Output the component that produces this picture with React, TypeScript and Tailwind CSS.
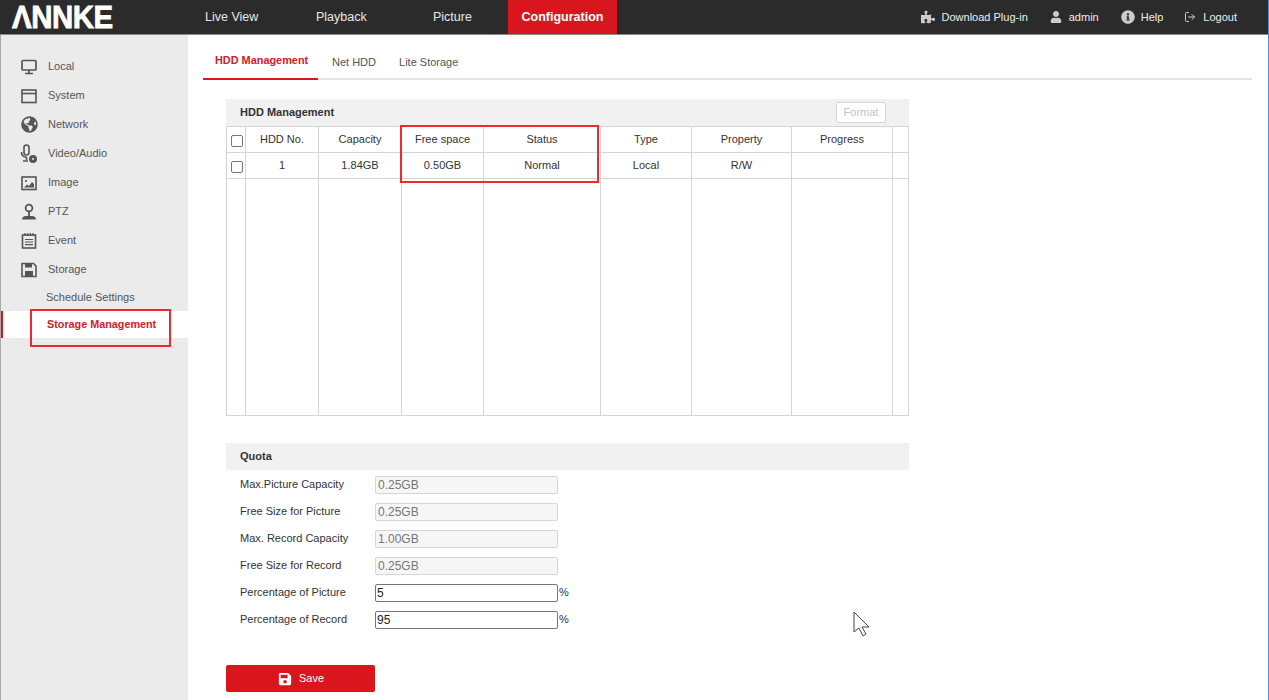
import React from 'react';
import { LogOut } from 'lucide-react';
import { FaGlobeAmericas, FaPuzzlePiece, FaUser, FaInfoCircle, FaSave } from 'react-icons/fa';

const MonitorIcon = () => (
  <svg width="16" height="16" viewBox="0 0 16 16" fill="none" stroke="#555" strokeWidth="1.7">
    <rect x="1" y="1.500" width="14" height="9.500" rx="1" />
    <path d="M8 11v3M4 14.500h8" />
  </svg>
);

const WindowIcon = () => (
  <svg width="16" height="16" viewBox="0 0 16 16" fill="none" stroke="#555" strokeWidth="1.6">
    <rect x="1" y="2" width="14" height="12.500" />
    <path d="M1 5.500h14" />
  </svg>
);

const MicIcon = () => (
  <svg width="18" height="20" viewBox="0 0 18 20" fill="none" stroke="#555" strokeWidth="1.6">
    <rect x="4" y="1" width="5" height="10" rx="2.5" />
    <path d="M1.500 8c0 3.500 2 5 5 5M6.500 13v3M3 17h5" />
    <circle cx="13" cy="15" r="3.200" fill="#555" />
    <circle cx="13" cy="15" r="1" fill="#ebebeb" stroke="none" />
  </svg>
);

const PictureIcon = () => (
  <svg width="16" height="16" viewBox="0 0 16 16" fill="none" stroke="#555" strokeWidth="1.6">
    <rect x="1" y="2" width="14" height="12.500" />
    <circle cx="5" cy="6" r="1.100" fill="#555" stroke="none" />
    <path d="M3 12.500l3-3 2 1.500 3-4 2 2v3.500z" fill="#555" stroke="none" />
  </svg>
);

const PtzIcon = () => (
  <svg width="18" height="18" viewBox="0 0 18 18" fill="none" stroke="#555" strokeWidth="1.8">
    <circle cx="9" cy="5" r="3.400" />
    <path d="M9 8.500v4.500" />
    <path d="M2 16.500c0-2 1.500-3.500 4-3.500h6c2.500 0 4 1.500 4 3.500z" fill="#555" stroke="none" />
  </svg>
);

const EventIcon = () => (
  <svg width="16" height="17" viewBox="0 0 16 17" fill="none" stroke="#555" strokeWidth="1.6">
    <rect x="1.500" y="3" width="13" height="13" />
    <path d="M4 1v3M6.700 1v3M9.400 1v3M12 1v3" strokeWidth="1.200" />
    <path d="M4 7.500h8M4 10h8M4 12.700h8" strokeWidth="1.200" />
  </svg>
);

const DiskIcon = () => (
  <svg width="16" height="16" viewBox="0 0 16 16" fill="none" stroke="#555" strokeWidth="1.6">
    <path d="M1 1.500h11.500l2.500 2.500v10.500h-14z" />
    <path d="M4 2v3.500h7V2" fill="#555" stroke="none" />
    <rect x="4" y="9" width="8" height="5" fill="#555" stroke="none" />
  </svg>
);

const navItems = [
  { label: 'Local', icon: <MonitorIcon /> },
  { label: 'System', icon: <WindowIcon /> },
  { label: 'Network', icon: <FaGlobeAmericas size={17} color="#555" /> },
  { label: 'Video/Audio', icon: <MicIcon /> },
  { label: 'Image', icon: <PictureIcon /> },
  { label: 'PTZ', icon: <PtzIcon /> },
  { label: 'Event', icon: <EventIcon /> },
  { label: 'Storage', icon: <DiskIcon /> },
];

const columns = [
  { label: 'HDD No.', value: '1', width: 'w-[73px]' },
  { label: 'Capacity', value: '1.84GB', width: 'w-[83px]' },
  { label: 'Free space', value: '0.50GB', width: 'w-[82px]' },
  { label: 'Status', value: 'Normal', width: 'w-[117px]' },
  { label: 'Type', value: 'Local', width: 'w-[91px]' },
  { label: 'Property', value: 'R/W', width: 'w-[100px]' },
  { label: 'Progress', value: '', width: 'w-[101px]' },
];

const quotaRows = [
  { label: 'Max.Picture Capacity', value: '0.25GB', disabled: true },
  { label: 'Free Size for Picture', value: '0.25GB', disabled: true },
  { label: 'Max. Record Capacity', value: '1.00GB', disabled: true },
  { label: 'Free Size for Record', value: '0.25GB', disabled: true },
  { label: 'Percentage of Picture', value: '5', disabled: false },
  { label: 'Percentage of Record', value: '95', disabled: false },
];

const Checkbox = () => (
  <div className="w-[12px] h-[12px] border border-[#767676] rounded-[2px] bg-white ml-[4px] mt-[2px]"></div>
);

export default function App() {
  return (
    <div className="relative w-[1269px] h-[700px] overflow-hidden bg-white font-['Liberation_Sans',Arial,sans-serif] text-[11px] text-[#333] border-r border-[#4a90d9]">
      <header className="h-[35px] bg-[#2b2b2b] border-b border-[#8a8a8a] flex items-stretch text-[#e8e8e8]">
        <div className="w-[205px] pl-[12px] flex items-center">
          <span aria-label="ANNKE" className="block text-[32px] leading-[34px] font-bold text-white origin-left scale-x-[0.92] tracking-[-0.5px] [-webkit-text-stroke:0.8px_white]">ΛNNKE</span>
        </div>
        <nav className="flex items-center text-[12.5px]">
          <span className="w-[111px]">Live View</span>
          <span className="w-[117px]">Playback</span>
          <span className="w-[75px]">Picture</span>
          <span className="w-[109px] h-full bg-[#d9161e] text-white font-bold flex items-center justify-center">Configuration</span>
        </nav>
        <div className="ml-auto flex items-center pr-[31px] text-[11px] text-[#eee]">
          <FaPuzzlePiece size={14} color="#ccc" className="mr-[7px]" />
          <span className="mr-[22px]">Download Plug-in</span>
          <FaUser size={12} color="#ccc" className="mr-[7px]" />
          <span className="mr-[22px]">admin</span>
          <FaInfoCircle size={14} color="#ccc" className="mr-[6px]" />
          <span className="mr-[21px]">Help</span>
          <LogOut size={12} color="#ccc" className="mr-[7px]" />
          <span>Logout</span>
        </div>
      </header>

      <div className="flex h-[665px]">
        <aside className="w-[188px] shrink-0 bg-[#ebebeb] border-l border-[#a8a8a8] pt-[17px] text-[#555]">
          {navItems.map(item => (
            <div key={item.label} className="h-[29px] flex items-center">
              <div className="w-[18px] ml-[19px] flex justify-center">{item.icon}</div>
              <span className="ml-[10px]">{item.label}</span>
            </div>
          ))}
          <div className="h-[27px] pl-[45px] flex items-center">Schedule Settings</div>
          <div className="h-[27px] pl-[44px] flex items-center bg-white border-l-2 border-[#d9161e] font-bold text-[10.8px] text-[#d0202a]">Storage Management</div>
        </aside>

        <main className="flex-1 min-w-0 pl-[15px] pr-[16px]">
          <div className="h-[45px] flex items-stretch border-b-2 border-[#e4e4e4] pt-[9px]">
            <div className="w-[115px] -mb-[2px] pl-[12px] pt-[8px] border-b-2 border-[#d9161e] font-bold text-[10.9px] text-[#d0202a]">HDD Management</div>
            <div className="ml-[14px] pt-[10px] text-[#555]">Net HDD</div>
            <div className="ml-[23px] pt-[10px] text-[#555]">Lite Storage</div>
          </div>

          <section className="ml-[23px] w-[683px] mt-[19px]">
            <div className="h-[27px] bg-[#f1f1f1] pl-[14px] pr-[23px] flex items-center justify-between">
              <span className="font-bold text-[#333]">HDD Management</span>
              <span className="w-[50px] h-[21px] border border-[#d6d6d6] rounded-[2px] bg-white flex items-center justify-center text-[#c4c4c4]">Format</span>
            </div>
            <div className="flex h-[290px] border border-[#d4d4d4] text-[#333] text-center">
              <div className="w-[19px] shrink-0 border-r border-[#d4d4d4]">
                <div className="h-[26px] border-b border-[#d4d4d4] flex items-center"><Checkbox /></div>
                <div className="h-[26px] border-b border-[#d4d4d4] flex items-center"><Checkbox /></div>
              </div>
              {columns.map(col => (
                <div key={col.label} className={`${col.width} shrink-0 border-r border-[#d4d4d4]`}>
                  <div className="h-[26px] border-b border-[#d4d4d4] flex items-center justify-center">{col.label}</div>
                  <div className="h-[26px] border-b border-[#d4d4d4] flex items-center justify-center">{col.value}</div>
                </div>
              ))}
              <div className="flex-1">
                <div className="h-[26px] border-b border-[#d4d4d4]"></div>
                <div className="h-[26px] border-b border-[#d4d4d4]"></div>
              </div>
            </div>
          </section>

          <section className="ml-[23px] w-[683px] mt-[27px]">
            <div className="h-[27px] bg-[#f1f1f1] pl-[14px] flex items-center font-bold text-[#333]">Quota</div>
            <div className="pt-[1px]">
              {quotaRows.map(row => (
                <div key={row.label} className="h-[27px] pl-[14px] flex items-center">
                  <span className="w-[135px] shrink-0">{row.label}</span>
                  <span className={row.disabled
                    ? 'w-[183px] h-[18px] pl-[2px] flex items-center rounded-[2px] border border-[#d6d6d6] bg-[#f6f6f6] text-[#777] text-[12px]'
                    : 'w-[183px] h-[18px] pl-[1px] flex items-center rounded-[2px] border border-[#767676] bg-white text-[#222] text-[12px]'}>
                    {row.value}
                  </span>
                  {!row.disabled && <span className="ml-[1px]">%</span>}
                </div>
              ))}
            </div>
            <button className="mt-[32px] w-[149px] h-[27px] pl-[1px] rounded-[2px] bg-[#d9161e] text-white flex items-center justify-center gap-[7px]">
              <FaSave size={14} color="#fff" />
              <span>Save</span>
            </button>
          </section>
        </main>
      </div>

      {/* annotations */}
      <div className="absolute left-[400px] top-[125px] w-[199px] h-[58px] border-2 border-[#ee2a2f]"></div>
      <div className="absolute left-[30px] top-[309px] w-[141px] h-[38px] border-2 border-[#ee2a2f]"></div>
      <svg className="absolute left-[852px] top-[610px]" width="20" height="30" viewBox="0 0 20 30" fill="white" stroke="#444" strokeWidth="1">
        <path d="M2 2v20l5-4 4 8 3-2-4-7h7z" />
      </svg>
    </div>
  );
}
